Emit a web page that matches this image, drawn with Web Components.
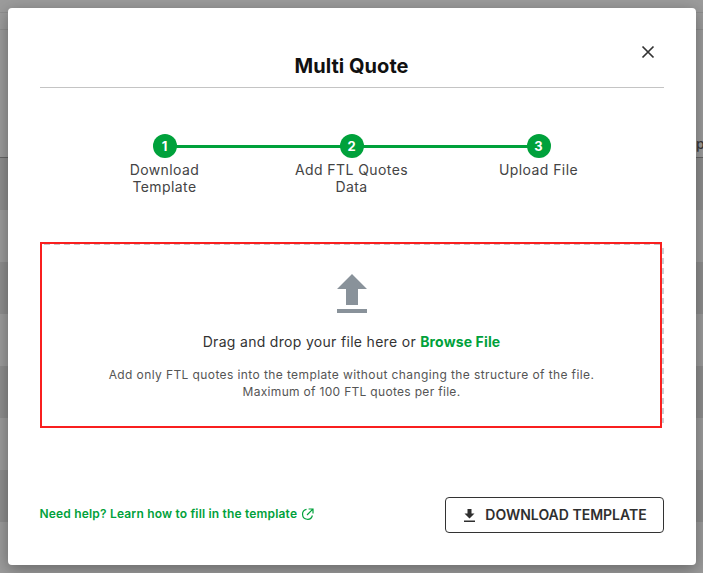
<!doctype html>
<html lang="en">
<head>
<meta charset="utf-8">
<title>Multi Quote</title>
<style>
  html, body { margin: 0; height: 100%; }
  body { width: 703px; height: 573px; overflow: hidden; font-family: "Inter", "Liberation Sans", sans-serif; }
</style>
</head>
<body>
<app-backdrop>
  <mq-modal heading="Multi Quote">
    <mq-stepper>
      <mq-step n="1">Download<br>Template</mq-step>
      <mq-step n="2">Add FTL Quotes<br>Data</mq-step>
      <mq-step n="3">Upload File</mq-step>
    </mq-stepper>
    <mq-dropzone></mq-dropzone>
    <mq-footer></mq-footer>
  </mq-modal>
</app-backdrop>
<script>
function def(name, html) {
  customElements.define(name, class extends HTMLElement {
    constructor() {
      super();
      this.attachShadow({ mode: 'open' }).innerHTML = html;
    }
    connectedCallback() {
      const a = this.shadowRoot.querySelector('[data-attr]');
      if (a) a.textContent = this.getAttribute('n') || this.getAttribute('heading') || '';
    }
  });
}
def('app-backdrop', `<style>
  :host { display: block; position: relative; width: 703px; height: 573px; overflow: hidden; background: #9c9c9c; }
  .page { display: flex; flex-direction: column; height: 100%; }
  .page > * { flex: none; }
  .top { height: 12px; border-bottom: 1px solid #8f8f8f; }
  .nav { height: 16px; border-bottom: 1px solid #8f8f8f; }
  .head { height: 127px; border-bottom: 1px solid #666; display: flex; justify-content: flex-end; }
  .head span { font: 500 14px/17px "Inter", sans-serif; color: #3a3a3a; margin-top: 105px; width: 7px; overflow: hidden; }
  .row { height: 52px; }
  .row.d { background: #8e8e8e; }
  .overlay { position: absolute; inset: 0; display: flex; justify-content: center; align-items: center; }
</style>
<div class="page">
  <div class="top"></div><div class="nav"></div>
  <div class="head"><span>p</span></div>
  <div class="row d"></div><div class="row"></div><div class="row d"></div><div class="row"></div><div class="row d"></div><div class="row"></div><div class="row d"></div><div class="row"></div>
</div>
<div class="overlay"><slot></slot></div>`);

def('mq-modal', `<style>
  :host { display: flex; flex-direction: column; box-sizing: border-box; width: 688px; height: 557px; background: #fff; border-radius: 4px; padding: 0 32px; box-shadow: 0 4px 16px rgba(0,0,0,.35); color: #2b2b2b; position: relative; }
  header { height: 79px; border-bottom: 1px solid #c4c4c4; display: flex; align-items: center; justify-content: center; flex: none; }
  h1 { margin: 37px 0 0; font: 700 20px/24px "Inter", sans-serif; color: #111; letter-spacing: .04px; }
  button { position: absolute; top: 34px; right: 38px; width: 20px; height: 20px; padding: 0; background: none; border: 0; }
  svg { display: block; }
</style>
<header><h1 data-attr></h1></header>
<button aria-label="Close"><svg width="20" height="20" viewBox="0 0 20 20"><path d="M4.5 4.5l11 11M15.5 4.5l-11 11" stroke="#333" stroke-width="1.7" fill="none"/></svg></button>
<slot></slot>`);

def('mq-stepper', `<style>
  :host { display: grid; grid-template-columns: repeat(3, 187px); justify-content: center; margin-top: 46px; }
</style><slot></slot>`);

def('mq-step', `<style>
  :host { display: flex; flex-direction: column; align-items: center; position: relative; font: 400 14px/17px "Inter", sans-serif; color: #444; text-align: center; letter-spacing: .42px; }
  .dot { width: 24px; height: 24px; border-radius: 50%; background: #00a13b; color: #fff; font: 700 13px/24px "Inter", sans-serif; letter-spacing: 0; margin-bottom: 3px; position: relative; z-index: 1; }
  :host(:not(:last-child))::after { content: ""; position: absolute; left: 50%; width: 100%; top: 11px; height: 3px; background: #00a13b; }
</style><div class="dot" data-attr></div><div><slot></slot></div>`);

def('mq-dropzone', `<style>
  :host { display: flex; flex-direction: column; align-items: center; box-sizing: border-box; height: 186px; margin-top: 47px; padding-top: 32px; position: relative; }
  .red { position: absolute; left: 0; top: 0; width: 622px; height: 186px; box-sizing: border-box; border: 2px solid #f91f1f; }
  .dash-top { position: absolute; left: 4px; top: 2px; width: 618px; height: 1px; background: repeating-linear-gradient(90deg, #c8c8cc 0 6px, transparent 6px 10px); }
  .dash-right { position: absolute; left: 622px; top: 6px; width: 2px; height: 175px; background: repeating-linear-gradient(180deg, #cdcdd2 0 6px, transparent 6px 10px); }
  p { margin: 0; }
  .drag { font: 400 14px/20px "Inter", sans-serif; color: #333; margin-top: 19px; letter-spacing: .31px; }
  .drag b { color: #00a13b; font-weight: 700; letter-spacing: .14px; }
  .note { font: 400 12px/17px "Inter", sans-serif; color: #555; text-align: center; margin-top: 14px; letter-spacing: .4px; }
  .note span { letter-spacing: .31px; }
  svg { display: block; }
</style>
<div class="dash-top"></div><div class="dash-right"></div><div class="red"></div>
<svg width="30" height="39" viewBox="0 0 30 39"><path d="M15 0L30 15H21V31H9V15H0Z M0 35H30V39H0Z" fill="#89929a"/></svg>
<p class="drag">Drag and drop your file here or <b>Browse File</b></p>
<p class="note">Add only FTL quotes into the template without changing the structure of the file.<br><span>Maximum of 100 FTL quotes per file.</span></p>`);

def('mq-footer', `<style>
  :host { display: flex; justify-content: space-between; align-items: center; margin-top: 69px; }
  a { display: flex; align-items: center; gap: 4px; font: 600 12px/16px "Inter", sans-serif; color: #00a13b; text-decoration: none; letter-spacing: .18px; margin-top: -2px; }
  button { display: flex; align-items: center; justify-content: center; gap: 10px; width: 219px; height: 36px; box-sizing: border-box; border: 1px solid #333; border-radius: 4px; background: #fff; font: 600 14px/18px "Inter", sans-serif; color: #2f2f2f; padding: 0 0 0 3px; }
  svg { display: block; }
</style>
<a href="#">Need help? Learn how to fill in the template <svg width="13" height="13" viewBox="0 0 13 13" fill="none" stroke="#00a13b" stroke-width="1.2"><path d="M5.5 1.4A5 5 0 1 0 11.4 7.5"/><path d="M6 7L11.6 1.4M7.6 1H12V5.4"/></svg></a>
<button><svg width="11" height="13" viewBox="0 0 11 13"><path d="M3.5 0H7.5V4.5H10.5L5.5 9.5L.5 4.5H3.5Z M0 11.5H11V13H0Z" fill="#2f2f2f"/></svg>DOWNLOAD TEMPLATE</button>`);
</script>
</body>
</html>
